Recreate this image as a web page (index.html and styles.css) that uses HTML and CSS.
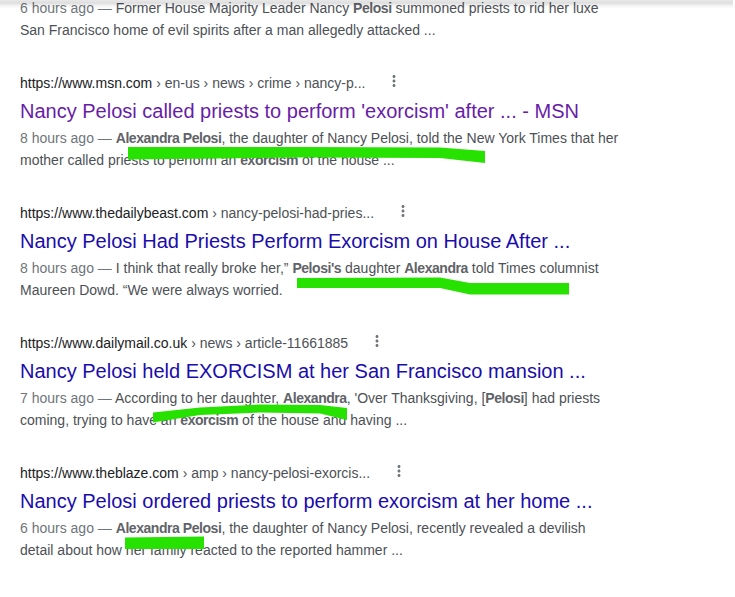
FILE: index.html
```html
<!DOCTYPE html>
<html lang="en">
<head>
<meta charset="utf-8">
<title>Search results</title>
<link rel="stylesheet" href="styles.css">
</head>
<body>
<div class="page">
  <div class="topshade"></div>
  <div class="results">
    <div class="result">
      <div class="snippet"><span class="date">6 hours ago — </span>Former House Majority Leader Nancy <em>Pelosi</em> summoned priests to rid her luxe San Francisco home of evil spirits after a man allegedly attacked ...</div>
    </div>

    <div class="result">
      <div class="url"><cite>https://www.msn.com<span class="crumbs"> › en-us › news › crime › nancy-p...</span></cite><span class="more"><svg viewBox="0 0 24 24" width="18" height="18"><path d="M12 8c1.1 0 2-.9 2-2s-.9-2-2-2-2 .9-2 2 .9 2 2 2zm0 2c-1.1 0-2 .9-2 2s.9 2 2 2 2-.9 2-2-.9-2-2-2zm0 6c-1.1 0-2 .9-2 2s.9 2 2 2 2-.9 2-2-.9-2-2-2z"/></svg></span></div>
      <h3 class="title visited">Nancy Pelosi called priests to perform 'exorcism' after ... - MSN</h3>
      <div class="snippet"><span class="date">8 hours ago — </span><em>Alexandra Pelosi</em>, the daughter of Nancy Pelosi, told the New York Times that her mother called priests to perform an <em>exorcism</em> of the house ...</div>
    </div>

    <div class="result">
      <div class="url"><cite>https://www.thedailybeast.com<span class="crumbs"> › nancy-pelosi-had-pries...</span></cite><span class="more"><svg viewBox="0 0 24 24" width="18" height="18"><path d="M12 8c1.1 0 2-.9 2-2s-.9-2-2-2-2 .9-2 2 .9 2 2 2zm0 2c-1.1 0-2 .9-2 2s.9 2 2 2 2-.9 2-2-.9-2-2-2zm0 6c-1.1 0-2 .9-2 2s.9 2 2 2 2-.9 2-2-.9-2-2-2z"/></svg></span></div>
      <h3 class="title">Nancy Pelosi Had Priests Perform Exorcism on House After ...</h3>
      <div class="snippet"><span class="date">8 hours ago — </span>I think that really broke her,” <em>Pelosi's</em> daughter <em>Alexandra</em> told Times columnist Maureen Dowd. “We were always worried.</div>
    </div>

    <div class="result">
      <div class="url"><cite>https://www.dailymail.co.uk<span class="crumbs"> › news › article-11661885</span></cite><span class="more"><svg viewBox="0 0 24 24" width="18" height="18"><path d="M12 8c1.1 0 2-.9 2-2s-.9-2-2-2-2 .9-2 2 .9 2 2 2zm0 2c-1.1 0-2 .9-2 2s.9 2 2 2 2-.9 2-2-.9-2-2-2zm0 6c-1.1 0-2 .9-2 2s.9 2 2 2 2-.9 2-2-.9-2-2-2z"/></svg></span></div>
      <h3 class="title">Nancy Pelosi held EXORCISM at her San Francisco mansion ...</h3>
      <div class="snippet"><span class="date">7 hours ago — </span>According to her daughter, <em>Alexandra</em>, 'Over Thanksgiving, [<em>Pelosi</em>] had priests coming, trying to have an <em>exorcism</em> of the house and having ...</div>
    </div>

    <div class="result">
      <div class="url"><cite>https://www.theblaze.com<span class="crumbs"> › amp › nancy-pelosi-exorcis...</span></cite><span class="more"><svg viewBox="0 0 24 24" width="18" height="18"><path d="M12 8c1.1 0 2-.9 2-2s-.9-2-2-2-2 .9-2 2 .9 2 2 2zm0 2c-1.1 0-2 .9-2 2s.9 2 2 2 2-.9 2-2-.9-2-2-2zm0 6c-1.1 0-2 .9-2 2s.9 2 2 2 2-.9 2-2-.9-2-2-2z"/></svg></span></div>
      <h3 class="title">Nancy Pelosi ordered priests to perform exorcism at her home ...</h3>
      <div class="snippet"><span class="date">6 hours ago — </span><em>Alexandra Pelosi</em>, the daughter of Nancy Pelosi, recently revealed a devilish detail about how her family reacted to the reported hammer ...</div>
    </div>
  </div>

  <svg class="marks" viewBox="0 0 735 597" width="735" height="597">
    <polygon points="128,147 300,147 440,147.5 485,151 485,163 440,158 300,157.5 128,159.5"/>
    <polygon points="297,278 440,277.5 470,283 569,283 569,294.5 470,294.5 440,288 297,288"/>
    <polygon points="153,412.5 200,407.5 260,404.5 320,405 347,408 347,420 320,413.5 260,412.5 200,415 153,422.5"/>
    <polygon points="125,537.5 204,536.5 204,549 125,549"/>
  </svg>
</div>
</body>
</html>
```

FILE: styles.css
```css
html, body {
  margin: 0;
  padding: 0;
  background: #fff;
}

.page {
  position: relative;
  width: 735px;
  height: 597px;
  overflow: hidden;
  font-family: "Liberation Sans", Arial, sans-serif;
}

.topshade {
  position: absolute;
  top: 0;
  left: 0;
  right: 2px;
  height: 9px;
  background: linear-gradient(to bottom, rgba(0,0,0,0.09) 0, rgba(0,0,0,0.13) 3px, rgba(0,0,0,0.04) 6px, rgba(0,0,0,0) 9px);
  z-index: 2;
}

.results {
  margin-top: -3px;
  padding-left: 20px;
  display: flex;
  flex-direction: column;
  gap: 31px;
}

.result {
  width: 600px;
}

.url {
  display: flex;
  align-items: flex-start;
  height: 22px;
  line-height: 22px;
  font-size: 14px;
}

.url cite {
  font-style: normal;
  color: #202124;
  white-space: nowrap;
}

.crumbs {
  color: #4d5156;
}

.more {
  margin-left: 20px;
  width: 18px;
  height: 18px;
  fill: #70757a;
  display: block;
}

.more svg {
  display: block;
}

.title {
  margin: 4px 0 0;
  font-size: 20px;
  font-weight: normal;
  line-height: 26px;
  color: #1a0dab;
}

.title.visited {
  color: #681da8;
}

.snippet {
  margin-top: 3px;
  font-size: 14px;
  line-height: 22px;
  color: #4d5156;
}

.result:first-child .snippet {
  margin-top: 0;
}

.snippet em {
  font-style: normal;
  font-weight: bold;
  letter-spacing: -0.45px;
  color: #5f6368;
}

.date {
  color: #70757a;
}

.marks {
  position: absolute;
  top: 0;
  left: 0;
  fill: #27e200;
  pointer-events: none;
}
```
